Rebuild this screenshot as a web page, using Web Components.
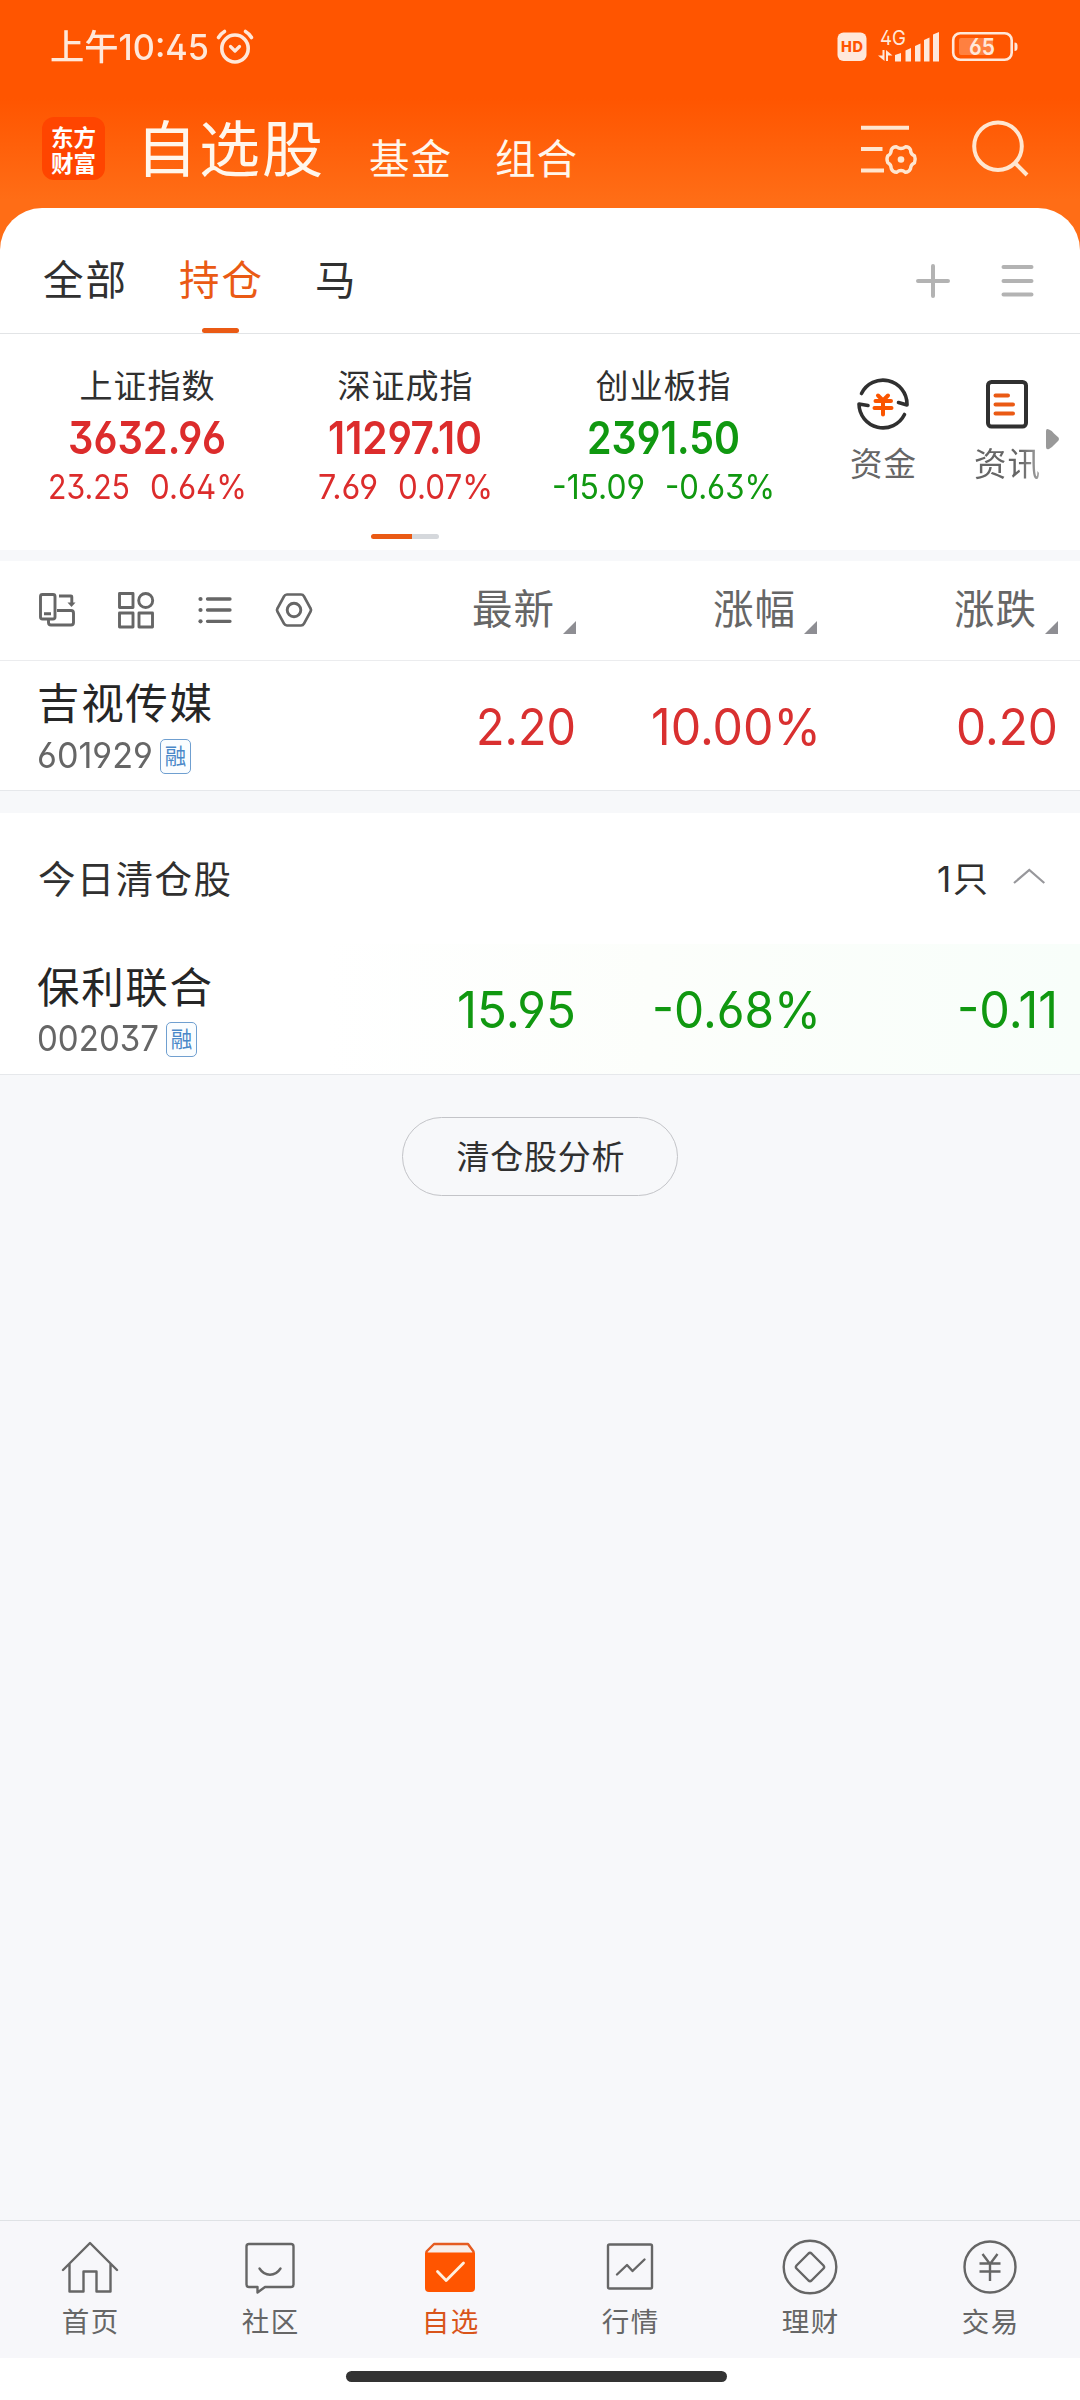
<!DOCTYPE html>
<html lang="zh-CN">
<head>
<meta charset="utf-8">
<title>自选股</title>
<style>
html,body{margin:0;padding:0}
body{width:1080px;height:2400px;overflow:hidden;background:#f7f8fa;font-family:Inter,"Noto Sans CJK SC",sans-serif;font-feature-settings:"ss01","cv03","cv04";color:#333}
</style>
</head>
<body>
<stock-app></stock-app>
<script>
const define = (name, html, after) => customElements.define(name, class extends HTMLElement {
  connectedCallback() {
    if (this.shadowRoot) return;
    const root = this.attachShadow({ mode: 'open' });
    root.innerHTML = typeof html === 'function' ? html(this) : html;
    if (after) after(this, root);
  }
});

/* Text run fitted to an exact advance width (attribute w, px): spread when short, condensed when long. */
define('fit-text', el => `<style>:host{display:inline-block;white-space:nowrap;width:${el.getAttribute('w')}px}span{display:inline-block;white-space:nowrap;transform-origin:0 50%}</style><span></span>`,
  (el, root) => {
    const s = root.querySelector('span'), t = el.getAttribute('t'), w = +el.getAttribute('w');
    s.textContent = t;
    const natural = s.getBoundingClientRect().width;
    if (natural > w) s.style.transform = `scaleX(${w / natural})`;
    else s.style.letterSpacing = ((w - natural) / Math.max(1, t.length - 1)) + 'px';
  });
const fit = (t, w, cls = '') => `<fit-text class="${cls}" t="${t}" w="${w}"></fit-text>`;

define('status-bar', `<style>
:host{display:flex;height:93px;box-sizing:border-box;padding:0 62px 0 50px;align-items:center;color:#ffe8da}
.t{font-size:35px;line-height:50px;font-weight:450}
svg{display:block;flex:none}.g{flex:1}
text{font-family:Inter,sans-serif}
</style>
${fit('上午10:45', 159, 't')}
<svg style="margin-left:6px" width="42" height="40" viewBox="0 0 42 40" fill="none" stroke="#ffe8da" stroke-linecap="round" stroke-linejoin="round"><ellipse cx="20" cy="21.5" rx="13.2" ry="13.5" stroke-width="3.600"/><path d="M15.5 19.5l4.500 4.500 4.500-4.500" stroke-width="3.200"/><path d="M3.500 10.500q2.500-4 6-6M36.500 10.500q-2.500-4-6-6" stroke-width="3.600"/></svg>
<div class="g"></div>
<svg width="181" height="54" viewBox="837 20 181 54" fill="#ffe8da"><rect x="837.500" y="32.500" width="29" height="28.500" rx="6"/><text x="852" y="52" font-size="14.500" font-weight="800" fill="#ff5500" text-anchor="middle" textLength="22">HD</text>
<text x="880" y="44.500" font-size="20.500" textLength="26" lengthAdjust="spacingAndGlyphs">4G</text>
<path d="M882.500 50h2v11l-6.500-5.500h4.500zM886 50l6.500 5.500H888V61h-2z"/>
<path d="M895 55l6-2v8.500h-6zM905.500 50.500l5.500-2.500v13.500h-5.500zM915 46l5.500-2.500v18H915zM924 40l5.500-2.500v24H924zM933 34.500l6-2.500v29.500h-6z"/>
<rect x="953.200" y="33.200" width="58.500" height="26.600" rx="7" fill="none" stroke="#ffe8da" stroke-width="2.600"/><rect x="959" y="38" width="34" height="17" rx="2" fill="#ff8040"/><path d="M1014.500 42.500q3 0 3 3v2.500q0 3-3 3z"/><text x="982" y="54.500" font-size="23" font-weight="600" text-anchor="middle" textLength="26" lengthAdjust="spacingAndGlyphs">65</text></svg>`);

define('app-header', `<style>
:host{display:flex;height:115px;box-sizing:border-box;padding:0 46px 0 42px;color:#fff6ec}
.logo{margin-top:24px;width:63px;height:63px;border-radius:12px;background:#ff4500;display:flex;flex-direction:column;align-items:center;justify-content:center;color:#fff;font-family:"Noto Sans CJK SC",sans-serif;font-weight:700}
.logo span{font-size:22.500px;line-height:26px;height:26px;display:block}
.title{font-size:61px;line-height:80px;margin:17px 5px 0 31px}
.sub{font-size:40.500px;line-height:60px;margin-top:37px}
.g{flex:1}svg{display:block;flex:none;margin-top:23px}
</style>
<div class="logo"><span>东方</span><span>财富</span></div>
${fit('自选股', 187, 'title')}
<div style="width:41px"></div>${fit('基金', 82, 'sub')}<div style="width:44px"></div>${fit('组合', 82, 'sub')}
<div class="g"></div>
<svg width="176" height="66" viewBox="858 116 176 66" fill="none" stroke="#ffe6d0" stroke-width="4"><path d="M861 127.700h48M861 149h21.500M861 170.600h23"/>
<path stroke-width="3.400" stroke-linejoin="round" d="M896.500 146.800q4.500 3.400 9 0q3.400-.2 5 3q.2 4.500 4 6q1.500 3.500 0 7q-3.800 1.500-4 6q-1.600 3.500-5 3.500q-4.500-3.400-9 0q-3.600 0-5.200-3.500q0-4.500-3.500-6q-1.700-3.500 0-7q3.500-1.500 3.500-6q1.600-3.200 5.200-3z"/><circle cx="901" cy="159.500" r="3.300" fill="#ffe6d0" stroke="none"/>
<circle cx="998" cy="146.200" r="23.800"/><path d="M1015 163l12 12"/></svg>`);

define('watch-tabs', `<style>
:host{display:flex;height:126px;box-sizing:border-box;border-bottom:1px solid #e2e4e6;padding:0 45px 0 43px;font-size:40.500px}
.tab{display:flex;flex-direction:column;align-items:center;line-height:60px;padding-top:43px;height:82px;margin-right:53px;color:#303030}
.tab.on{color:#ea5a14}.tab.on::after{content:"";width:37px;height:5px;border-radius:3px;background:#ea5a14;margin-top:17px}
.g{flex:1}svg{display:block;margin-top:53px}
</style>
<div class="tab">${fit('全部', 83)}</div><div class="tab on">${fit('持仓', 83)}</div><div class="tab">马</div>
<div class="g"></div>
<svg width="120" height="40" viewBox="915 261 120 40" stroke="#b3b3b3" stroke-width="4" stroke-linecap="round"><path d="M918 281h30M933 266v30M1003.500 267h28M1003.500 281h28M1003.500 294.500h28"/></svg>`);

define('index-quote', el => {
  const a = n => el.getAttribute(n).split('|');
  const [v, vw] = a('value'), [c, cw] = a('change'), [p, pw] = a('percent');
  return `<style>
:host{display:flex;flex-direction:column;align-items:center;width:258px;color:${el.hasAttribute('down') ? '#109810' : '#dc2c2c'}}
.n{font-size:33px;line-height:50px;color:#303030;margin-top:27px}
.v{font-size:45.500px;font-weight:600;line-height:56px;margin-top:-1px}
.r{display:flex;gap:20px;font-size:33.500px;line-height:44px;margin-top:-1px}
</style>${fit(el.getAttribute('name'), 135, 'n')}${fit(v, vw, 'v')}<div class="r">${fit(c, cw)}${fit(p, pw)}</div>`;
});

define('tool-entry', el => `<style>:host{display:flex;flex-direction:column;align-items:center;width:124px;color:#666;font-size:32.500px;line-height:46px}.i{height:54px;margin:43px 0 11px;display:flex;align-items:center}${el.hasAttribute('fade') ? '.l{-webkit-mask-image:linear-gradient(90deg,#000 70%,rgba(0,0,0,.6))}' : ''}</style><div class="i"><slot></slot></div>${fit(el.getAttribute('label'), 66, 'l')}`);

define('index-strip', `<style>
:host{display:flex;flex-direction:column;height:216px;position:relative}
.row{display:flex;padding-left:18px}
.p{width:68px;height:5px;border-radius:3px;background:linear-gradient(90deg,#ea5a14 41px,#d5d8dc 41px);margin:7px 0 0 371px}
.fl{position:absolute;left:1046px;top:94px;width:14px;height:22px}svg{display:block}
.row{height:193px}
</style>
<div class="row">
<index-quote name="上证指数" value="3632.96|158" change="23.25|82" percent="0.64%|97"></index-quote>
<index-quote name="深证成指" value="11297.10|154" change="7.69|60" percent="0.07%|95"></index-quote>
<index-quote down name="创业板指" value="2391.50|153" change="-15.09|93" percent="-0.63%|110"></index-quote>
<div style="width:29px"></div>
<tool-entry label="资金"><svg width="54" height="54" viewBox="856 377 54 54" fill="none" stroke-linecap="round" stroke-linejoin="round" stroke="#303030" stroke-width="3.600"><path d="M861.500 393.500a24 24 0 0 1 45.500 10.500v1l-8.500-2.500M904.500 414.500a24 24 0 0 1-45.500-10.500l9 1.500"/><path stroke="#fa5500" stroke-width="4" d="M878 395.500l5 5 5-5M883 401v13.500M875.500 401h15.500M874.500 408h17"/></svg></tool-entry>
<tool-entry label="资讯" fade><svg width="44" height="54" viewBox="985 377 44 54" fill="none" stroke-linecap="round"><rect x="988" y="382" width="38" height="44.500" rx="3.500" stroke="#303030" stroke-width="4"/><path stroke="#ea5a14" stroke-width="4" d="M995.500 395.500h12.500M995.500 404.500h17.500M995.500 413.500h17.500"/></svg></tool-entry>
</div>
<div class="p"></div>
<svg class="fl" viewBox="0 0 14 22" fill="#999"><path d="M0 3q0-3 3-1.500q3 1 5 4l4.500 4q1 1.500 0 3L8 17q-2 2.500-5 4q-3 1-3-2z"/></svg>`);

define('sort-label', el => `<style>:host{display:flex;width:241px;justify-content:flex-end;color:#666;font-size:40.500px;line-height:60px}i{width:0;height:0;border-left:13px solid transparent;border-bottom:13px solid #8e8e93;margin:41px 0 0 9px}</style>${fit(el.getAttribute('label'), 82)}<i></i>`);

define('table-head', `<style>:host{display:flex;height:99px;box-sizing:border-box;padding:19px 22px 0 38px;background:#fff;justify-content:space-between}
.c{display:flex}svg{display:block}</style>
<svg width="276" height="60" viewBox="38 580 276 60" fill="none" stroke="#666" stroke-width="2.900" stroke-linejoin="round">
<rect x="40.500" y="594.500" width="14.500" height="24.500" rx="2"/><path d="M44 613.700h7M57 610.500h14q2.500 0 2.500 2.500v9.500q0 2.500-2.500 2.500H51q-2.500 0-2.500-2.500v-3.500M59 596h12q.8 0 .8.800v8"/><path d="M67.500 602.500h8l-4 4.500z" fill="#666" stroke="none"/>
<rect x="119.500" y="593.500" width="13.500" height="14"/><circle cx="145.700" cy="600.500" r="7"/><rect x="119.500" y="613" width="13.500" height="14"/><rect x="139" y="613" width="13.500" height="14"/>
<g stroke-linecap="round" stroke-width="3.300"><path d="M207.500 599h22.500M207.500 610h22.500M207.500 621.300h22.500"/></g><g fill="#666" stroke="none"><circle cx="200.500" cy="599" r="2.100"/><circle cx="200.500" cy="610" r="2.100"/><circle cx="200.500" cy="621.300" r="2.100"/></g>
<path d="M287 594.500h14q2 0 3 1.800l6.500 12q1 1.700 0 3.400l-6.500 12q-1 1.800-3 1.800h-14q-2 0-3-1.800l-6.500-12q-1-1.700 0-3.400l6.500-12q1-1.800 3-1.800z" stroke-width="2.700"/><circle cx="294" cy="610" r="6.800"/></svg>
<div class="c"><sort-label label="最新"></sort-label><sort-label label="涨幅"></sort-label><sort-label label="涨跌"></sort-label></div>`);

define('stock-row', el => {
  const cells = el.getAttribute('cells').split(',').map(c => c.split('|'));
  const [code, cw] = el.getAttribute('code').split('|');
  const down = el.hasAttribute('down');
  return `<style>
:host{display:flex;box-sizing:border-box;height:131px;padding:0 22px 0 37px;justify-content:space-between;border-bottom:1px solid #e6e8eb;${down ? 'background:linear-gradient(90deg,#fff 30%,#fcfefb 60%,#f8fefa)' : 'border-top:1px solid #ebecee;background:#fff'}}
.n{font-size:42.500px;line-height:60px;color:#262626;margin-top:${down ? 14 : 13}px;display:block}
.c{display:flex;align-items:center;height:36px;margin-top:${down ? 3 : 4}px;color:#666;font-size:35.500px;line-height:36px}
.b{width:29px;height:33px;border:1px solid #6f9fd0;border-radius:5px;color:#4a88c8;background:#fafdff;font-size:21.500px;line-height:33px;text-align:center;margin-left:7px}
.v{display:flex;font-size:51px;line-height:60px;margin-top:${down ? 36 : 36}px;color:${down ? '#109810' : '#d93030'}}
.v div{width:241px;display:flex;justify-content:flex-end}
.v div:nth-child(2){width:245px;margin-right:-4px}
</style><div>${fit(el.getAttribute('name'), 175, 'n')}<div class="c">${fit(code, cw)}<div class="b">融</div></div></div>
<div class="v">${cells.map(([t, w]) => `<div>${fit(t, w)}</div>`).join('')}</div>`;
});

define('section-head', `<style>:host{display:flex;height:131px;box-sizing:border-box;padding:0 34px 5px 38px;align-items:center;background:#fff;color:#303030;font-size:37.500px}.g{flex:1}.k{font-size:35px;margin-right:24px}svg{display:block}</style>
${fit('今日清仓股', 193)}<div class="g"></div>${fit('1只', 51, 'k')}<svg width="34" height="20" viewBox="0 0 34 20" fill="none" stroke="#97979b" stroke-width="2.200"><path d="M2 17L17.300 4l15 13"/></svg>`);

define('pill-button', `<style>:host{display:flex;align-items:center;justify-content:center;width:276px;height:79px;box-sizing:border-box;border:1px solid #c3c4c8;border-radius:40px;margin:42px auto 0;padding:0 0 3px 1px;font-size:33px;color:#303030}</style>${fit('清仓股分析', 168)}`);

define('nav-item', el => `<style>:host{display:flex;flex-direction:column;align-items:center;width:180px;font-size:27.500px;line-height:40px;color:${el.hasAttribute('on') ? '#d9541a' : '#666'}}.i{height:60px;margin:16px 0 5px}</style><div class="i"><slot></slot></div>${fit(el.getAttribute('label'), 56.5)}`);

define('bottom-nav', `<style>:host{display:block;margin-top:auto}
.bar{display:flex;height:138px;box-sizing:border-box;border-top:1px solid #dfe2e5;background:#f7f7fa}
svg{display:block}.home{height:42px;background:#fff;display:flex;justify-content:center}.home i{width:381px;height:11px;border-radius:6px;background:#333;margin:13px 7px 0 0}
svg{fill:none;stroke:#666;stroke-width:2.400;stroke-linejoin:round;stroke-linecap:round}</style>
<div class="bar">
<nav-item label="首页"><svg width="60" height="60" viewBox="-30 -30 60 60"><path d="M-27 3L0-24 27 3M-20.500-3v27.500h14V4.500H6.500v20h14V-3"/></svg></nav-item>
<nav-item label="社区"><svg width="60" height="60" viewBox="-30 -30 60 60"><path d="M-21-23h42q2.500 0 2.500 2.500v38q0 2.500-2.500 2.500H-5l-7.500 5.500V20H-21q-2.500 0-2.500-2.500v-38q0-2.500 2.500-2.500z"/><path d="M-10.500 1.500q4 6.200 10.500 6.200t10.500-6.200"/></svg></nav-item>
<nav-item label="自选" on><svg width="60" height="60" viewBox="-30 -30 60 60"><path d="M-16-23h34l5.500 7.500v6h-47v-6z" fill="#f8eee9" stroke="#e55b20" stroke-width="2.400"/><path d="M-25-14.500h50V21q0 4-4 4h-42q-4 0-4-4z" fill="#ff5500" stroke="none"/><path stroke="#fff0df" stroke-width="2.800" d="M-12.500 4.500l8.700 9L13.500-4"/></svg></nav-item>
<nav-item label="行情"><svg width="60" height="60" viewBox="-30 -30 60 60"><rect x="-22" y="-22.500" width="44" height="44" rx="1.500"/><path d="M-13 7.500l10-9.500 5.500 6L14.500-7.500"/></svg></nav-item>
<nav-item label="理财"><svg width="60" height="60" viewBox="-30 -30 60 60"><circle r="26.300"/><path d="M-1.500-13.500q1.500-1.300 3 0l12 12q1.300 1.500 0 3l-12 12q-1.500 1.300-3 0l-12-12q-1.300-1.500 0-3z"/></svg></nav-item>
<nav-item label="交易"><svg width="60" height="60" viewBox="-30 -30 60 60"><circle r="25.500"/><path stroke-linecap="butt" d="M-7.500-13L0-3 7.500-13M0-3V14M-10.500-3.500h21M-10.500 4.500h21"/></svg></nav-item>
</div><div class="home"><i></i></div>`);

define('stock-app', `<style>
:host{display:flex;flex-direction:column;width:1080px;height:2400px;background:#f7f8fa}
.top{background:linear-gradient(#ff5500 0 98px,#ff6d16 200px)}
.card{background:#fff;border-radius:42px 42px 0 0}
table-head{margin-top:11px}section-head{margin-top:22px}
</style>
<div class="top"><status-bar></status-bar><app-header></app-header><div class="card"><watch-tabs></watch-tabs><index-strip></index-strip></div></div>
<table-head></table-head>
<stock-row name="吉视传媒" code="601929|116" cells="2.20|100,10.00%|170,0.20|102"></stock-row>
<section-head></section-head>
<stock-row down name="保利联合" code="002037|122" cells="15.95|119,-0.68%|169,-0.11|101"></stock-row>
<pill-button></pill-button>
<bottom-nav></bottom-nav>`);
</script>
</body>
</html>
